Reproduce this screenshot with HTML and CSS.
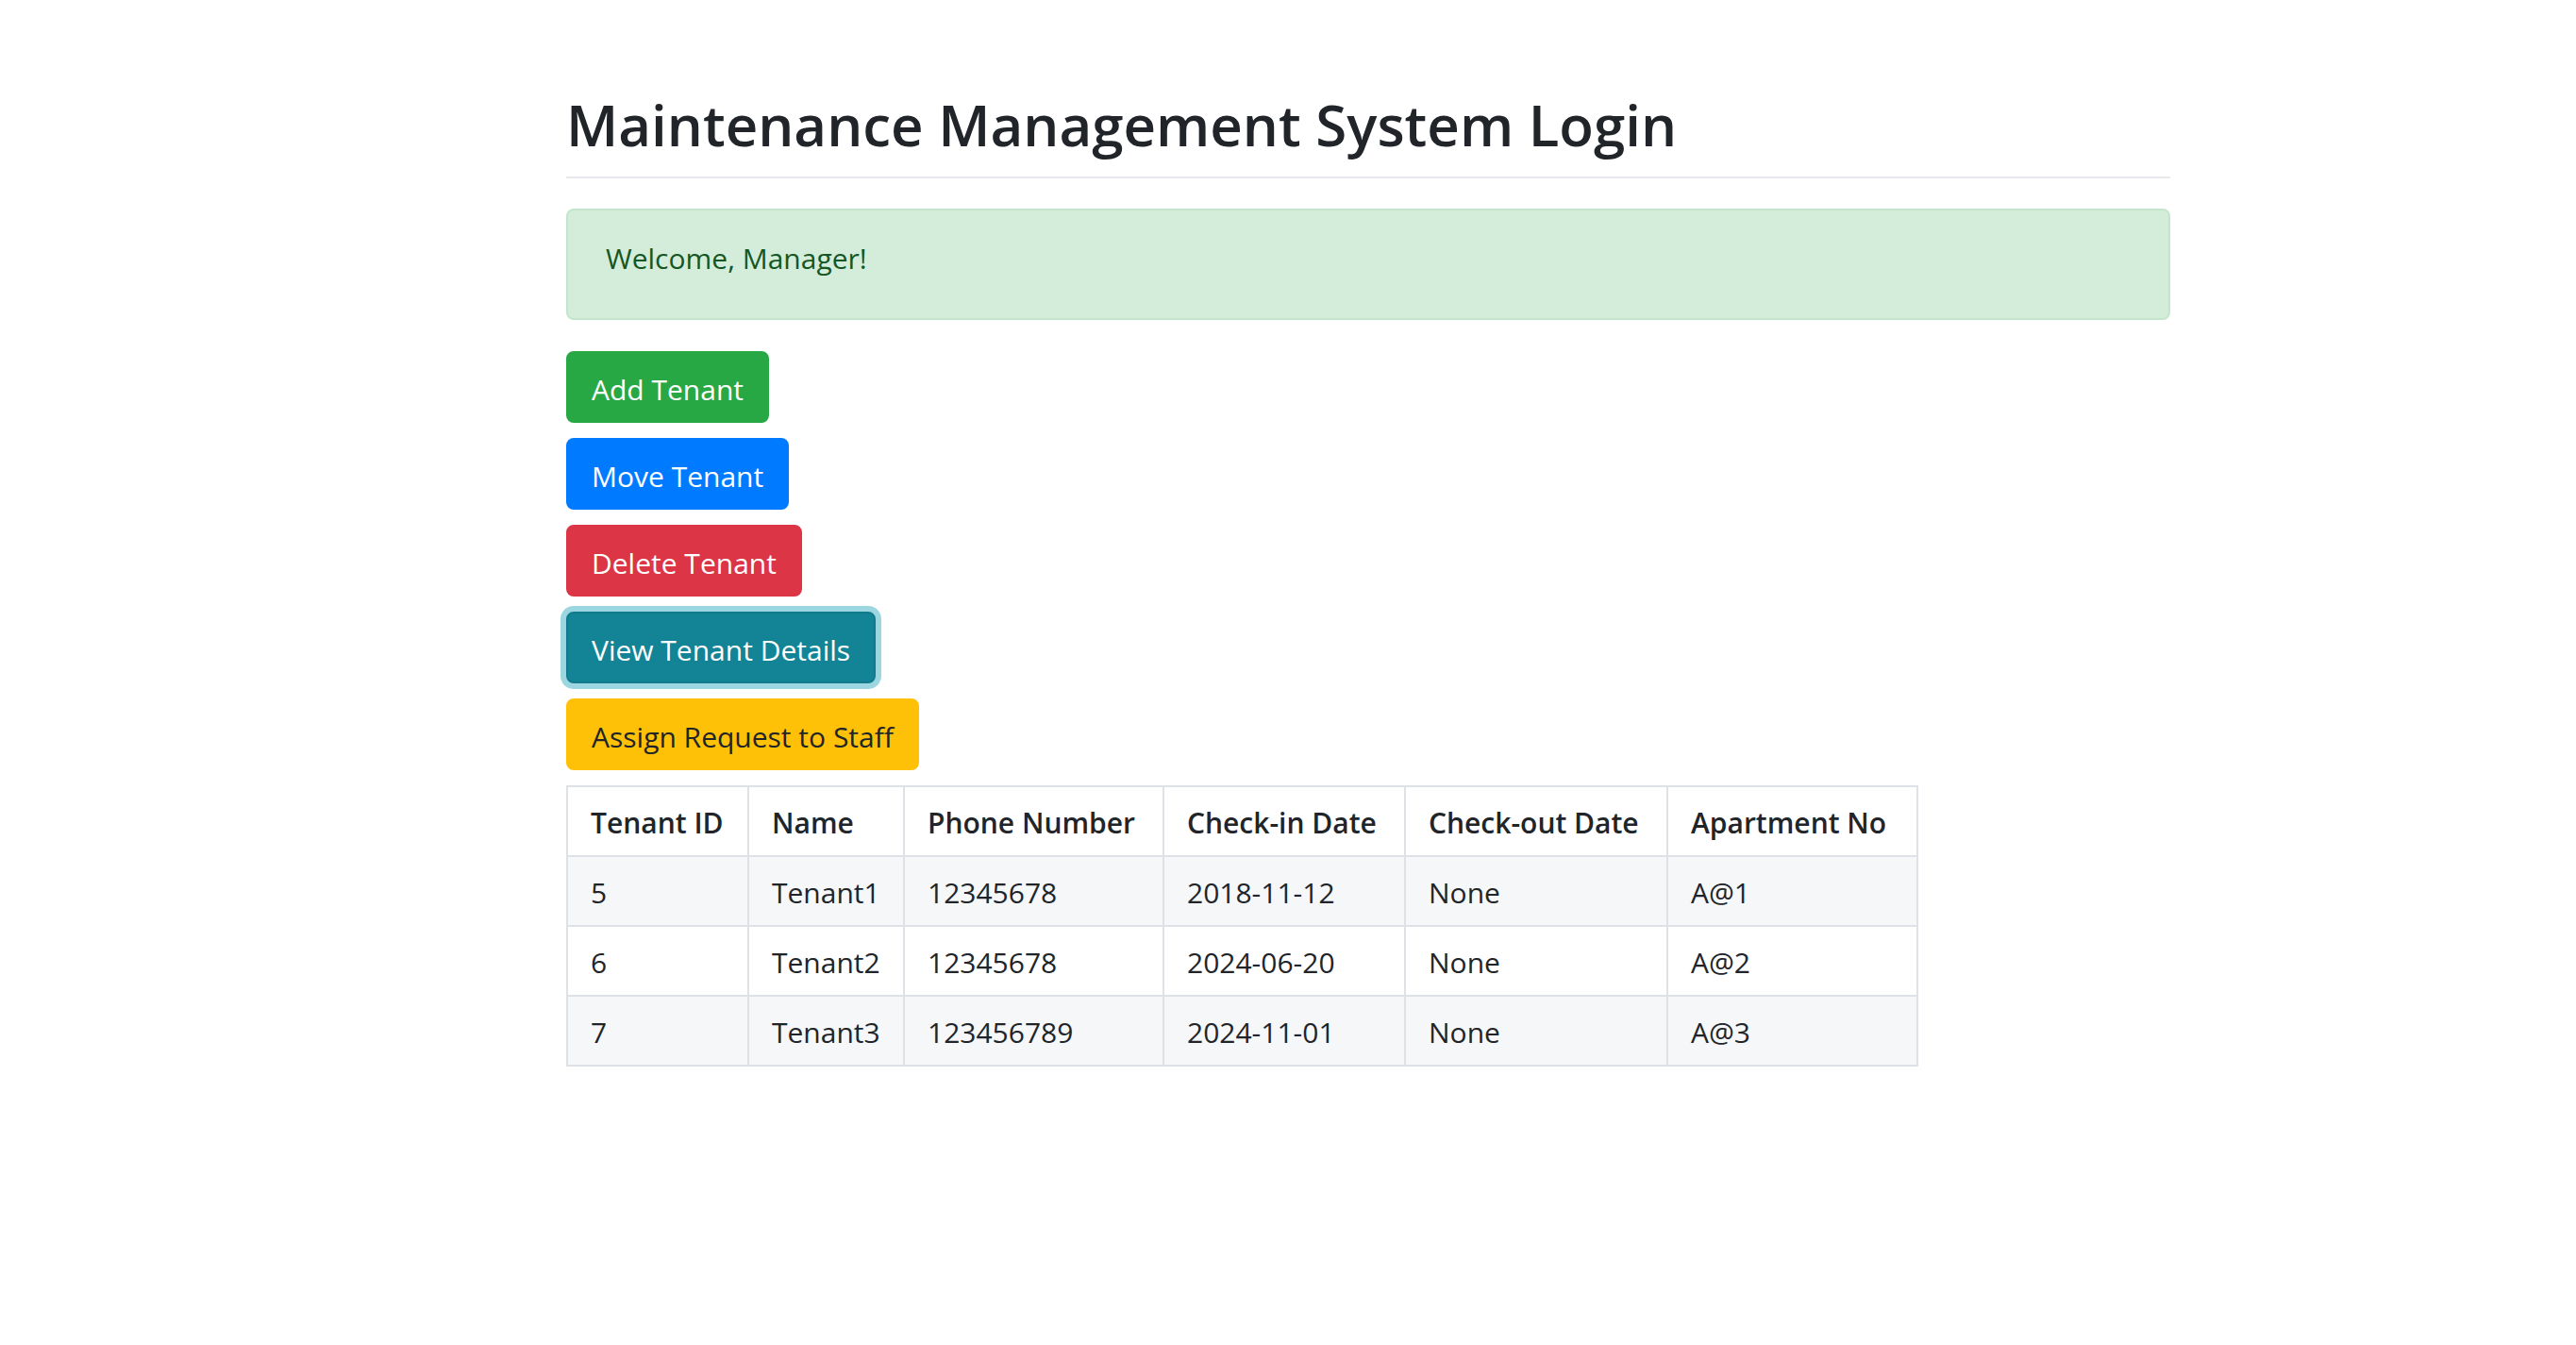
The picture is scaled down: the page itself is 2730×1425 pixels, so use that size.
FILE: index.html
```html
<!DOCTYPE html>
<html lang="en">
<head>
<meta charset="utf-8">
<title>Maintenance Management System Login</title>
<link rel="stylesheet" href="styles.css">
</head>
<body>
<div class="container">
  <h1 class="page-title">Maintenance Management System Login</h1>
  <div class="alert">Welcome, Manager!</div>
  <div class="actions">
    <div class="action"><button class="btn btn-green">Add Tenant</button></div>
    <div class="action"><button class="btn btn-blue">Move Tenant</button></div>
    <div class="action"><button class="btn btn-red">Delete Tenant</button></div>
    <div class="action"><button class="btn btn-teal">View Tenant Details</button></div>
    <div class="action"><button class="btn btn-yellow">Assign Request to Staff</button></div>
  </div>
  <table class="tenants">
    <colgroup>
      <col class="c-id"><col class="c-name"><col class="c-phone"><col class="c-in"><col class="c-out"><col class="c-apt">
    </colgroup>
    <thead>
      <tr><th>Tenant ID</th><th>Name</th><th>Phone Number</th><th>Check-in Date</th><th>Check-out Date</th><th>Apartment No</th></tr>
    </thead>
    <tbody>
      <tr><td>5</td><td>Tenant1</td><td>12345678</td><td>2018-11-12</td><td>None</td><td>A@1</td></tr>
      <tr><td>6</td><td>Tenant2</td><td>12345678</td><td>2024-06-20</td><td>None</td><td>A@2</td></tr>
      <tr><td>7</td><td>Tenant3</td><td>123456789</td><td>2024-11-01</td><td>None</td><td>A@3</td></tr>
    </tbody>
  </table>
</div>
</body>
</html>
```
FILE: styles.css
```css
html, body {
  margin: 0;
  padding: 0;
  background: #ffffff;
}
body {
  font-family: "Open Sans", "Noto Sans", "Liberation Sans", sans-serif;
  font-size: 30px;
  line-height: 48px;
  color: #212529;
}
.container {
  width: 1700px;
  margin-left: 600px;
  padding-top: 92px;
}
.page-title {
  margin: 0 0 32px 0;
  font-size: 60px;
  line-height: 80px;
  font-weight: 600;
  color: #212529;
  padding-bottom: 15px;
  border-bottom: 2px solid #e8e9ec;
}
.alert {
  box-sizing: border-box;
  padding: 27px 40px 39px 40px;
  border: 2px solid #c3e6cb;
  border-radius: 8px;
  background: #d4edda;
  color: #155724;
  margin-bottom: 33px;
}
.action {
  margin-bottom: 16px;
  line-height: 0;
}
.btn {
  display: inline-block;
  font-family: inherit;
  font-size: 30px;
  line-height: 48px;
  font-weight: 400;
  padding: 15px 25px 9px 25px;
  border: 2px solid transparent;
  border-radius: 8px;
  color: #ffffff;
  cursor: pointer;
}
.btn-green { background: #28a745; border-color: #28a745; }
.btn-blue { background: #007bff; border-color: #007bff; }
.btn-red { background: #dc3545; border-color: #dc3545; }
.btn-teal {
  background: #138496;
  border-color: #117a8b;
  box-shadow: 0 0 0 6px rgba(58, 176, 195, 0.5);
}
.btn-yellow { background: #ffc107; border-color: #ffc107; color: #212529; }

.tenants {
  border-collapse: collapse;
  table-layout: fixed;
  width: 1431px;
  border: 2px solid #dee2e6;
}
.c-id { width: 192px; }
.c-name { width: 165px; }
.c-phone { width: 275px; }
.c-in { width: 256px; }
.c-out { width: 278px; }
.c-apt { width: 265px; }
.tenants th,
.tenants td {
  border: 2px solid #dee2e6;
  padding: 14px 24px 10px 24px;
  text-align: left;
  vertical-align: top;
  white-space: nowrap;
}
.tenants th {
  font-weight: 600;
  background: #ffffff;
}
.tenants tbody tr:nth-child(odd) td {
  background: #f6f7f9;
}
```
